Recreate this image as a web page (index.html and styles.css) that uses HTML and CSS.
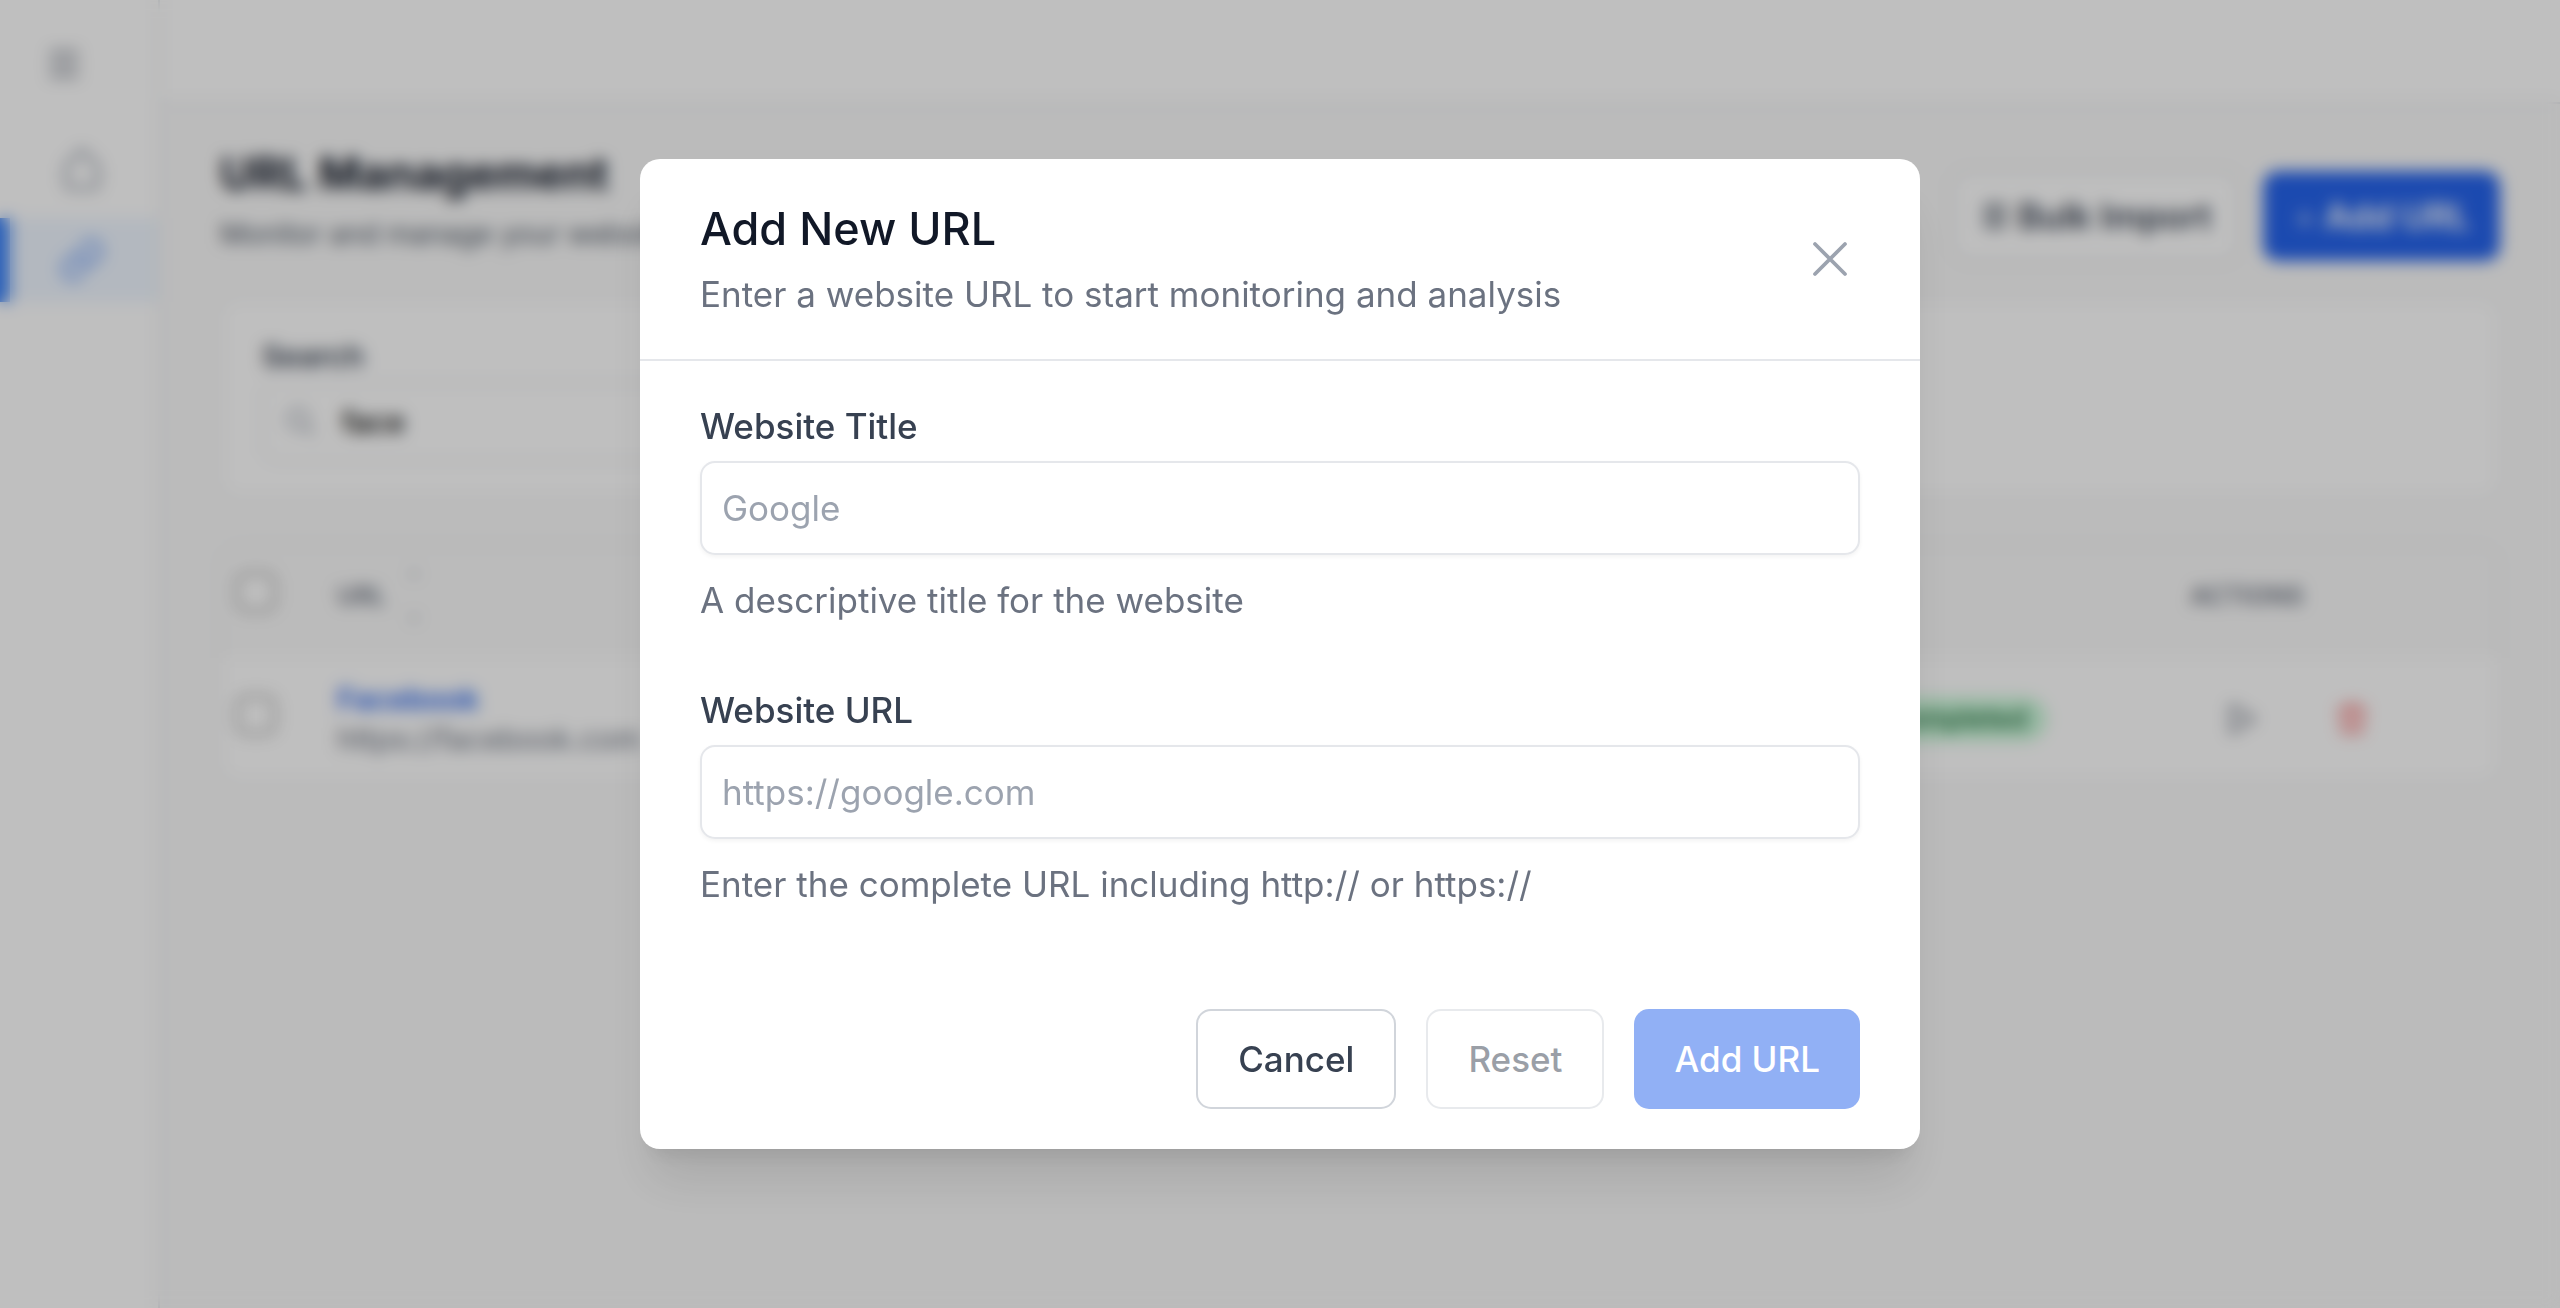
FILE: index.html
```html
<!DOCTYPE html>
<html lang="en">
<head>
<meta charset="utf-8">
<meta name="viewport" content="width=device-width, initial-scale=1">
<title>URL Management</title>
<link rel="stylesheet" href="styles.css">
</head>
<body>
<div class="app" inert>
  <aside class="sidebar">
    <button class="menu-button" type="button" aria-label="Toggle menu">
      <svg class="icon" viewBox="0 0 24 24"><path d="M4 5h16M4 12h16M4 19h16"/></svg>
    </button>
    <nav class="nav">
      <a class="nav-item" href="#home" aria-label="Home">
        <svg class="icon nav-icon" viewBox="0 0 24 24"><path d="M4 10l8-8 8 8v9a2 2 0 0 1-2 2H6a2 2 0 0 1-2-2z"/></svg>
      </a>
      <a class="nav-item nav-item-active" href="#urls" aria-label="URLs">
        <svg class="icon nav-icon" viewBox="0 0 24 24"><path d="M10 13a5 5 0 0 0 7.5.5l3-3a5 5 0 0 0-7-7l-1.700 1.700M14 11a5 5 0 0 0-7.500-.5l-3 3a5 5 0 0 0 7 7l1.700-1.700"/></svg>
      </a>
    </nav>
  </aside>
  <div class="main">
    <header class="topbar"></header>
    <main class="content">
      <div class="page-head">
        <div class="page-heading">
          <h1 class="page-title">URL Management</h1>
          <p class="page-subtitle">Monitor and manage your website URLs</p>
        </div>
        <div class="page-actions">
          <button class="button button-outline button-compact" type="button">
            <svg class="icon button-icon" viewBox="0 0 24 24"><path d="M5 3h14v18H5zM9 8h6M9 12h6M9 16h6"/></svg>
            Bulk Import
          </button>
          <button class="button button-primary button-compact" type="button"><span class="plus">+</span>Add URL</button>
        </div>
      </div>
      <section class="card filters">
        <label class="filter-label" for="search">Search</label>
        <div class="search-box">
          <svg class="icon search-icon" viewBox="0 0 24 24"><circle cx="10" cy="10" r="7"/><path d="M15 15l6 6"/></svg>
          <input class="search-input" id="search" type="text" value="face">
        </div>
      </section>
      <table class="card url-table">
        <thead>
          <tr>
            <th class="col-check"><input class="check" type="checkbox" aria-label="Select all"></th>
            <th><div class="sort-head">URL<span class="sort"><svg class="sort-icon" viewBox="0 0 12 8"><path d="M1 7l5-6 5 6z"/></svg><svg class="sort-icon" viewBox="0 0 12 8"><path d="M1 1l5 6 5-6z"/></svg></span></div></th>
            <th class="col-status">STATUS</th>
            <th class="col-actions">ACTIONS</th>
          </tr>
        </thead>
        <tbody>
          <tr>
            <td><input class="check" type="checkbox" aria-label="Select Facebook"></td>
            <td><a class="url-name" href="#facebook">Facebook</a><div class="url-address">https://facebook.com</div></td>
            <td class="status-cell"><span class="badge">Completed</span></td>
            <td>
              <div class="row-actions">
                <button class="icon-button" type="button" aria-label="Run"><svg class="icon" viewBox="0 0 24 24"><path d="M5 3l15 9-15 9z"/></svg></button>
                <button class="icon-button icon-danger" type="button" aria-label="Delete"><svg class="icon" viewBox="0 0 24 24"><path d="M3 6h18M8 6V3h8v3M5 6l1 15h12l1-15M10 11v6M14 11v6"/></svg></button>
              </div>
            </td>
          </tr>
        </tbody>
      </table>
    </main>
  </div>
</div>

<div class="overlay">
  <div class="modal" role="dialog" aria-modal="true" aria-labelledby="modal-title">
    <header class="modal-head">
      <div>
        <h2 class="modal-title" id="modal-title">Add New URL</h2>
        <p class="modal-subtitle">Enter a website URL to start monitoring and analysis</p>
      </div>
      <button class="close" type="button" aria-label="Close">
        <svg class="close-icon" viewBox="0 0 24 24"><path d="M6 18L18 6M6 6l12 12"/></svg>
      </button>
    </header>
    <form class="modal-form">
      <div class="field">
        <label class="field-label" for="site-title">Website Title</label>
        <input class="field-input" id="site-title" type="text" placeholder="Google" aria-describedby="title-help">
        <p class="field-help" id="title-help">A descriptive title for the website</p>
      </div>
      <div class="field">
        <label class="field-label" for="site-url">Website URL</label>
        <input class="field-input" id="site-url" type="url" placeholder="https://google.com" aria-describedby="url-help">
        <p class="field-help" id="url-help">Enter the complete URL including http:// or https://</p>
      </div>
      <div class="modal-actions">
        <button class="button button-outline" type="button">Cancel</button>
        <button class="button button-outline" type="reset" disabled>Reset</button>
        <button class="button button-primary" type="submit" disabled>Add URL</button>
      </div>
    </form>
  </div>
</div>
</body>
</html>
```
FILE: styles.css
```css
* {
  box-sizing: border-box;
}

body {
  margin: 0;
  background: #fafafa;
  color: #111827;
  font-family: Inter, "Liberation Sans", sans-serif;
  font-size: 30px;
  line-height: 40px;
}

h1, h2, p {
  margin: 0;
}

button, input {
  font: inherit;
}

.icon {
  display: block;
  width: 40px;
  height: 40px;
  fill: none;
  stroke: currentColor;
  stroke-width: 2;
  stroke-linecap: round;
  stroke-linejoin: round;
}

/* Page shell */
.app {
  display: flex;
  min-height: 100vh;
}

.sidebar {
  width: 160px;
  flex-shrink: 0;
  background: #fff;
  border-right: 2px solid #e5e7eb;
}

.menu-button {
  display: block;
  margin: 44px;
  padding: 0;
  border: 0;
  background: none;
  color: #6b7280;
}

.nav {
  display: flex;
  flex-direction: column;
  gap: 6px;
}

.nav-item {
  display: flex;
  height: 84px;
  padding-left: 58px;
  align-items: center;
  color: #9ca3af;
}

.nav-icon {
  width: 48px;
  height: 48px;
}

.nav-item-active {
  padding-left: 48px;
  border-left: 10px solid #3b82f6;
  background: #eff6ff;
  color: #6b9bf8;
}

.main {
  flex: 1;
  min-width: 0;
}

.topbar {
  height: 104px;
  background: #fff;
  border-bottom: 2px solid #e5e7eb;
}

.content {
  padding: 40px 60px;
}

.page-head {
  display: flex;
  min-height: 144px;
  justify-content: space-between;
  align-items: center;
  margin-bottom: 10px;
}

.page-heading {
  align-self: flex-start;
}

.page-title {
  margin-bottom: 10px;
  font-size: 45px;
  line-height: 60px;
}

.page-subtitle {
  color: #4b5563;
  font-size: 28px;
  line-height: 40px;
}

.page-actions {
  display: flex;
  gap: 24px;
}

.card {
  background: #fff;
  border: 2px solid #eceef0;
  border-radius: 20px;
}

.filters {
  padding: 38px 40px 34px;
  margin-bottom: 46px;
}

.filter-label {
  display: block;
  margin-bottom: 8px;
  color: #374151;
  font-weight: 600;
  line-height: 36px;
}

.search-box {
  display: flex;
  width: 50%;
  height: 80px;
  padding: 0 20px;
  align-items: center;
  gap: 24px;
  border: 2px solid #e5e7eb;
  border-radius: 15px;
}

.search-icon {
  width: 34px;
  height: 34px;
  color: #9ca3af;
}

.search-input {
  flex: 1;
  padding: 0;
  border: 0;
  background: none;
  color: #000;
  font-weight: 500;
}

/* URL table */
.url-table {
  width: 100%;
  table-layout: fixed;
  border-collapse: separate;
  border-spacing: 0;
  overflow: hidden;
}

.url-table th {
  height: 112px;
  padding: 0 0 12px;
  background: #fafafa;
  color: #6b7280;
  font-size: 25px;
  font-weight: 600;
  text-align: left;
}

.url-table td {
  height: 122px;
  padding: 0;
}

.col-check {
  width: 115px;
}

.col-status {
  width: 380px;
}

.url-table .status-cell {
  padding-left: 56px;
}

.col-actions {
  width: 308px;
}

.check {
  display: block;
  width: 40px;
  height: 40px;
  margin: 0 0 8px 14px;
  appearance: none;
  background: #fff;
  border: 3px solid #9a9a9a;
  border-radius: 10px;
}

.sort-head, .sort {
  display: flex;
  align-items: center;
  gap: 22px;
}

.sort {
  flex-direction: column;
  gap: 38px;
}

.sort-icon {
  width: 12px;
  height: 8px;
  fill: #9ca3af;
}

.url-name {
  color: #2563eb;
  font-weight: 600;
  text-decoration: none;
}

.url-address {
  color: #6b7280;
}

.badge {
  display: inline-block;
  padding: 2px 20px;
  border-radius: 25px;
  background: #c9f7d8;
  color: #166534;
  font-size: 27px;
  font-weight: 500;
}

.row-actions {
  display: flex;
  padding-left: 34px;
  gap: 74px;
}

.icon-button {
  padding: 0;
  border: 0;
  background: none;
  color: #6b7280;
}

.icon-button .icon {
  width: 36px;
  height: 36px;
}

.icon-danger {
  color: #f87171;
}

/* Buttons */
.button {
  display: flex;
  align-items: center;
  padding: 23px 40px;
  border: 2px solid transparent;
  border-radius: 15px;
  font-size: 35px;
  font-weight: 500;
  line-height: 50px;
}

.button-outline {
  border-color: #d1d5db;
  background: #fff;
  color: #374151;
}

.button-primary {
  padding: 25px 40px;
  border: 0;
  background: #2563eb;
  color: #fff;
}

.button-compact {
  gap: 8px;
  padding: 18px 26px;
  font-weight: 600;
}

.button-icon {
  width: 30px;
  height: 30px;
}

.button-primary.button-compact {
  padding: 20px 30px;
}

.plus {
  font-weight: 300;
}

.button:disabled {
  opacity: 0.5;
}

/* Dialog */
.overlay {
  position: fixed;
  inset: 0;
  display: flex;
  align-items: center;
  justify-content: center;
  background: rgba(0, 0, 0, 0.25);
  backdrop-filter: blur(8px);
}

.modal {
  width: 50%;
  min-width: 1000px;
  background: #fff;
  border-radius: 20px;
  box-shadow: 0 40px 50px -10px rgba(0, 0, 0, 0.1), 0 16px 20px -12px rgba(0, 0, 0, 0.1);
}

.modal-head {
  display: flex;
  align-items: center;
  justify-content: space-between;
  padding: 40px 60px;
  border-bottom: 2px solid #e5e7eb;
}

.modal-title {
  margin-bottom: 10px;
  font-size: 45px;
  font-weight: 500;
  line-height: 60px;
}

.modal-subtitle {
  color: #6b7280;
  font-size: 35px;
  line-height: 50px;
}

.close {
  padding: 0;
  border: 0;
  background: none;
  color: #9ca3af;
}

.close-icon {
  display: block;
  width: 60px;
  height: 60px;
  fill: none;
  stroke: currentColor;
  stroke-width: 1.5;
  stroke-linecap: round;
}

.modal-form {
  display: flex;
  flex-direction: column;
  gap: 60px;
  padding: 40px 60px;
  font-size: 35px;
  line-height: 50px;
}

.field {
  display: flex;
  flex-direction: column;
}

.field-label {
  margin-bottom: 10px;
  color: #374151;
  font-weight: 500;
}

.field-input {
  width: 100%;
  height: 94px;
  padding: 20px;
  border: 2px solid #e5e7eb;
  border-radius: 15px;
  background: #fff;
  color: #111827;
  box-shadow: 0 2px 4px rgba(0, 0, 0, 0.05);
}

.field-input::placeholder {
  color: #9ca3af;
  opacity: 1;
}

.field-help {
  margin-top: 20px;
  color: #6b7280;
}

.modal-actions {
  display: flex;
  justify-content: flex-end;
  gap: 30px;
  padding-top: 40px;
}
```
